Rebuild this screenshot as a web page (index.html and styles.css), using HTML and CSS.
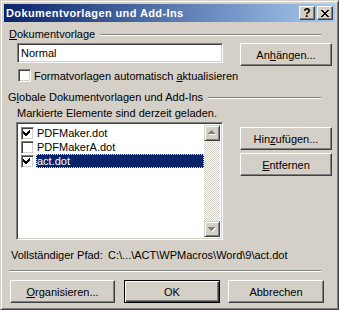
FILE: index.html
```html
<!DOCTYPE html>
<html lang="de">
<head>
    <meta charset="UTF-8">
    <meta name="viewport" content="width=device-width, initial-scale=1.0">
    <title>Dokumentvorlagen und Add-Ins</title>
    <link rel="stylesheet" href="styles.css">
</head>
<body>
    <div class="window">
        <div class="titlebar">
            <span class="title">Dokumentvorlagen und Add-Ins</span>
            <span class="caption-btns">
                <span class="cap-btn help">?</span>
                <span class="cap-btn close">
                    <svg width="8" height="7" viewBox="0 0 8 7" shape-rendering="crispEdges">
                        <path d="M0 0h2v1H0z M6 0h2v1H6z M1 1h2v1H1z M5 1h2v1H5z M2 2h4v1H2z M3 3h2v1H3z M2 4h4v1H2z M1 5h2v1H1z M5 5h2v1H5z M0 6h2v1H0z M6 6h2v1H6z" fill="#000"/>
                    </svg>
                </span>
            </span>
        </div>

        <div class="client">
            <div class="group-head head-template">
                <span><u>D</u>okumentvorlage</span>
                <span class="etch"></span>
            </div>

            <div class="template-row">
                <div class="field">Normal</div>
                <button class="btn side-btn">An<u>h</u>ängen...</button>
            </div>

            <div class="check-row">
                <span class="checkbox"></span>
                <span>Formatvorlagen automatisch <u>a</u>ktualisieren</span>
            </div>

            <div class="group-head head-global">
                <span>G<u>l</u>obale Dokumentvorlagen und Add-Ins</span>
                <span class="etch"></span>
            </div>

            <div class="hint">Markierte Elemente sind derzeit geladen.</div>

            <div class="list-row">
                <div class="listbox">
                    <div class="list-items">
                        <div class="list-item">
                            <span class="checkbox checked">
                                <svg width="9" height="9" viewBox="0 0 9 9" shape-rendering="crispEdges">
                                    <path d="M6 1h1v1H6z M5 2h2v1H5z M0 2h1v1H0z M0 3h2v1H0z M4 3h3v1H4z M0 4h6v1H0z M1 5h4v1H1z M2 6h2v1H2z M0 1h0z" fill="#000"/>
                                </svg>
                            </span>
                            <span class="item-label">PDFMaker.dot</span>
                        </div>
                        <div class="list-item">
                            <span class="checkbox"></span>
                            <span class="item-label">PDFMakerA.dot</span>
                        </div>
                        <div class="list-item">
                            <span class="checkbox checked">
                                <svg width="9" height="9" viewBox="0 0 9 9" shape-rendering="crispEdges">
                                    <path d="M6 1h1v1H6z M5 2h2v1H5z M0 2h1v1H0z M0 3h2v1H0z M4 3h3v1H4z M0 4h6v1H0z M1 5h4v1H1z M2 6h2v1H2z" fill="#000"/>
                                </svg>
                            </span>
                            <span class="item-label selected">act.dot</span>
                        </div>
                    </div>
                    <div class="scrollbar">
                        <div class="scroll-btn">
                            <svg width="14" height="14" viewBox="0 0 14 14" shape-rendering="crispEdges">
                                <path d="M7 5h1v1H7z M6 6h3v1H6z M5 7h5v1H5z M4 8h7v1H4z" fill="#fff"/>
                                <path d="M6 4h1v1H6z M5 5h3v1H5z M4 6h5v1H4z M3 7h7v1H3z" fill="#808080"/>
                            </svg>
                        </div>
                        <div class="scroll-track"></div>
                        <div class="scroll-btn">
                            <svg width="14" height="14" viewBox="0 0 14 14" shape-rendering="crispEdges">
                                <path d="M4 6h7v1H4z M5 7h5v1H5z M6 8h3v1H6z M7 9h1v1H7z" fill="#fff"/>
                                <path d="M3 5h7v1H3z M4 6h5v1H4z M5 7h3v1H5z M6 8h1v1H6z" fill="#808080"/>
                            </svg>
                        </div>
                    </div>
                </div>

                <div class="side-buttons">
                    <button class="btn side-btn">Hin<u>z</u>ufügen...</button>
                    <button class="btn side-btn"><u>E</u>ntfernen</button>
                </div>
            </div>

            <div class="path-row">
                <span class="path-label">Vollständiger Pfad:</span>
                <span>C:\...\ACT\WPMacros\Word\9\act.dot</span>
            </div>

            <div class="separator"></div>

            <div class="footer">
                <button class="btn organize-btn"><u>O</u>rganisieren...</button>
                <button class="btn default-btn ok-btn">OK</button>
                <button class="btn cancel-btn">Abbrechen</button>
            </div>
        </div>
    </div>
</body>
</html>
```

FILE: styles.css
```css
:root {
    --face: #D4D0C8;
    --shadow: #808080;
    --dark-shadow: #404040;
    --highlight: #FFFFFF;
    --select: #0A246A;
}

* {
    box-sizing: border-box;
}

body {
    margin: 0;
    font-family: 'Liberation Sans', Arial, sans-serif;
    font-size: 11px;
    color: #000;
    background-color: var(--face);
}

u {
    text-decoration: underline;
    text-underline-offset: 1px;
}

.window {
    width: 339px;
    height: 310px;
    padding: 3px;
    background-color: var(--face);
    border: 1px solid;
    border-color: var(--face) var(--dark-shadow) var(--dark-shadow) var(--face);
    box-shadow: inset 1px 1px var(--highlight), inset -1px -1px var(--shadow);
}

/* title bar */
.titlebar {
    display: flex;
    align-items: center;
    height: 18px;
    padding: 0 2px;
    background: linear-gradient(to right, #0A246A, #A6CAF0);
}

.title {
    color: white;
    font-weight: bold;
    letter-spacing: 0.4px;
}

.caption-btns {
    display: flex;
    gap: 2px;
    margin-left: auto;
}

.cap-btn {
    display: flex;
    align-items: center;
    justify-content: center;
    width: 16px;
    height: 14px;
    background-color: var(--face);
    border: 1px solid;
    border-color: var(--highlight) var(--dark-shadow) var(--dark-shadow) var(--highlight);
    box-shadow: inset -1px -1px var(--shadow);
}

.cap-btn.help {
    font-weight: bold;
    font-size: 12px;
    line-height: 12px;
}

/* shared controls */
.btn {
    height: 23px;
    padding: 0;
    font: inherit;
    color: #000;
    background-color: var(--face);
    border: 1px solid;
    border-color: var(--highlight) var(--dark-shadow) var(--dark-shadow) var(--highlight);
    box-shadow: inset -1px -1px var(--shadow);
}

.default-btn {
    border: 1px solid #000;
    box-shadow: inset 1px 1px var(--highlight), inset -1px -1px var(--dark-shadow), inset -2px -2px var(--shadow);
}

.sunken {
    border: 1px solid;
}

.field,
.listbox,
.checkbox {
    background-color: white;
    border: 1px solid;
    border-color: var(--shadow) var(--highlight) var(--highlight) var(--shadow);
    box-shadow: inset 1px 1px var(--dark-shadow), inset -1px -1px var(--face);
}

.checkbox {
    display: flex;
    align-items: center;
    justify-content: center;
    width: 13px;
    height: 13px;
    flex-shrink: 0;
}

.etch {
    flex: 1;
    height: 2px;
    margin-left: 5px;
    border-top: 1px solid var(--shadow);
    border-bottom: 1px solid var(--highlight);
}

/* client area */
.group-head {
    display: flex;
    align-items: center;
    height: 13px;
    line-height: 13px;
}

.head-template {
    width: 312px;
    margin: 6px 0 0 5px;
}

.template-row {
    display: flex;
    align-items: flex-start;
    margin: 2px 0 0 13px;
}

.field {
    width: 206px;
    height: 20px;
    padding-left: 3px;
    line-height: 18px;
}

.side-btn {
    width: 92px;
    margin-left: 17px;
}

.check-row {
    display: flex;
    align-items: center;
    gap: 3px;
    height: 13px;
    margin: 3px 0 0 14px;
}

.head-global {
    width: 313px;
    margin: 9px 0 0 4px;
}

.hint {
    height: 13px;
    line-height: 13px;
    margin: 3px 0 0 13px;
}

.list-row {
    display: flex;
    margin: 2px 0 0 12px;
}

.listbox {
    display: flex;
    width: 207px;
    height: 118px;
    padding: 2px;
}

.list-items {
    flex: 1;
    padding-top: 1px;
}

.list-item {
    display: flex;
    align-items: center;
    height: 14px;
    padding-left: 2px;
}

.list-item .checkbox {
    margin-right: 2px;
}

.item-label {
    flex: 1;
    height: 14px;
    padding-left: 1px;
    line-height: 14px;
}

.item-label.selected {
    color: white;
    background-color: var(--select);
    outline: 1px dotted #F5DB95;
    outline-offset: -1px;
}

.scrollbar {
    display: flex;
    flex-direction: column;
    width: 16px;
}

.scroll-btn {
    width: 16px;
    height: 16px;
    background-color: var(--face);
    border: 1px solid;
    border-color: var(--face) var(--dark-shadow) var(--dark-shadow) var(--face);
    box-shadow: inset 1px 1px var(--highlight), inset -1px -1px var(--shadow);
}

.scroll-btn svg {
    display: block;
}

.scroll-track {
    flex: 1;
    background: repeating-conic-gradient(var(--face) 0 25%, #fff 0 50%) 0 0 / 2px 2px;
}

.side-buttons {
    display: flex;
    flex-direction: column;
    gap: 3px;
    padding-top: 5px;
}

.path-row {
    display: flex;
    height: 13px;
    line-height: 13px;
    margin: 9px 0 0 7px;
}

.path-label {
    width: 97px;
}

.separator {
    width: 312px;
    height: 2px;
    margin: 8px 0 0 5px;
    border-top: 1px solid var(--shadow);
    border-bottom: 1px solid var(--highlight);
}

.footer {
    display: flex;
    margin: 8px 0 0 6px;
}

.organize-btn {
    width: 105px;
}

.ok-btn {
    width: 96px;
    margin-left: 9px;
}

.cancel-btn {
    width: 96px;
    margin-left: 8px;
}
```
